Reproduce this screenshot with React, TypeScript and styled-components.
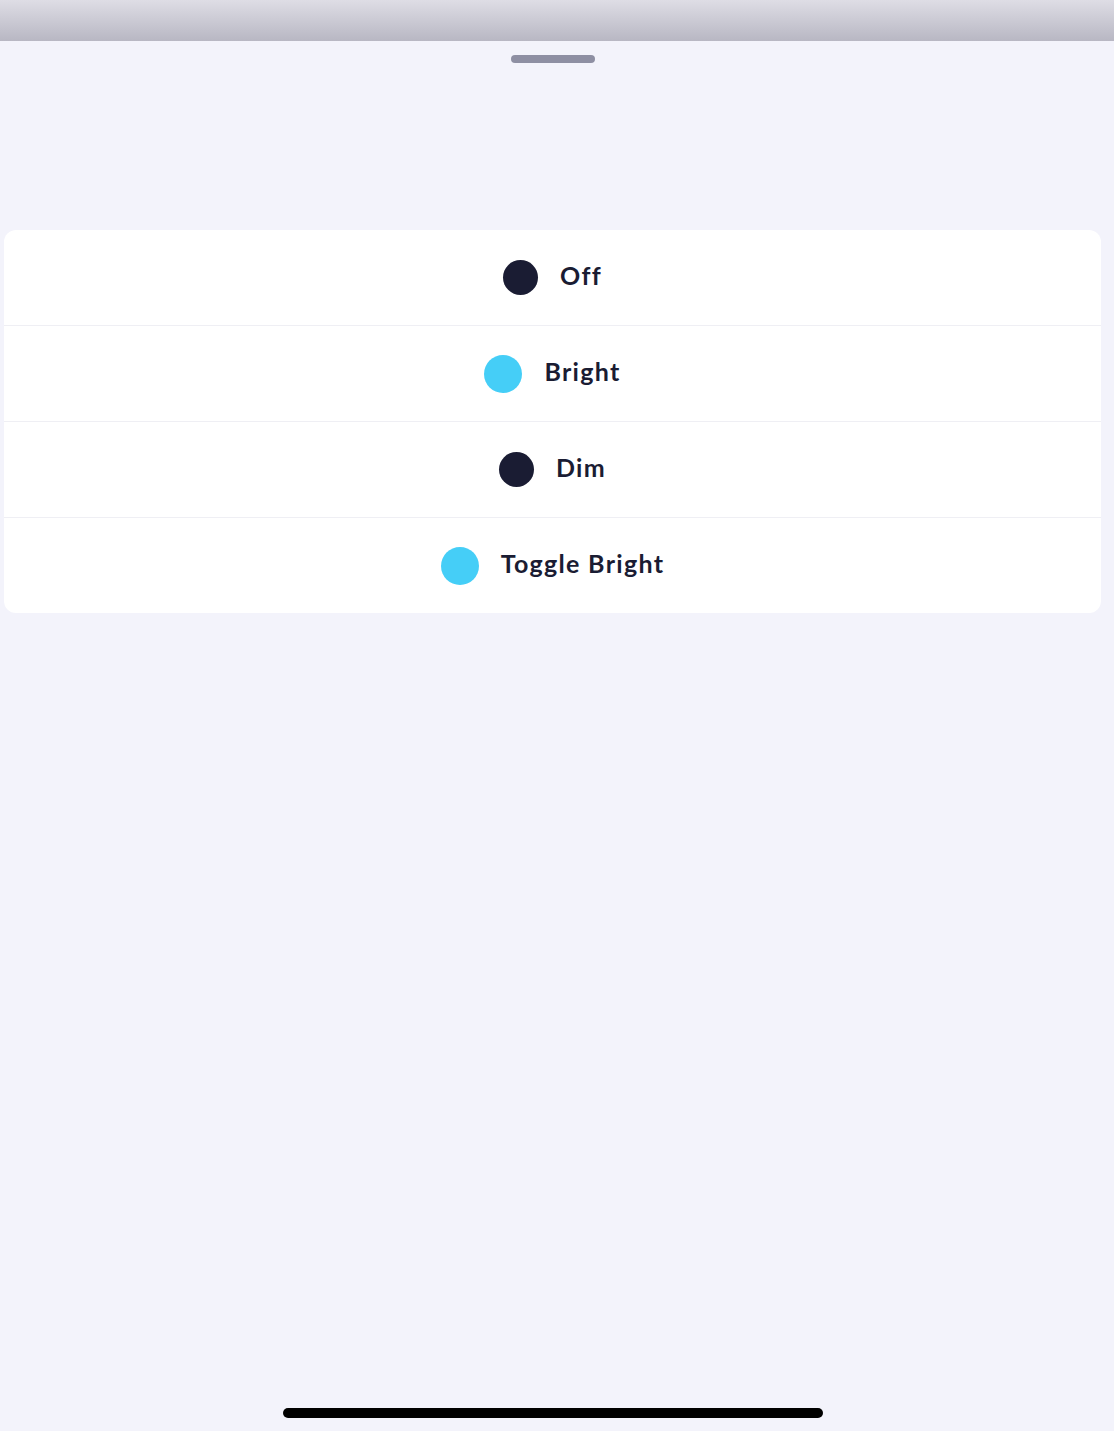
import React from "react";
import styled, { createGlobalStyle } from "styled-components";

const Global = createGlobalStyle`
  html, body { margin: 0; padding: 0; background: #f3f3fb; }
  body { font-family: "Lato", "Noto Sans", sans-serif; }
`;

const Page = styled.div`
  width: 1114px;
  height: 1431px;
  background: #f3f3fb;
  display: flex;
  flex-direction: column;
  overflow: hidden;
`;

const TopBar = styled.div`
  height: 41px;
  flex: none;
  background: linear-gradient(#dedde5, #b8b7c3);
`;

const HandleWrap = styled.div`
  display: flex;
  justify-content: center;
  padding-top: 14px;
  padding-right: 8px;
`;

const Handle = styled.div`
  width: 84px;
  height: 8px;
  border-radius: 4px;
  background: #8e8fa3;
`;

const Card = styled.div`
  margin: 167px 13px 0 4px;
  background: #ffffff;
  border-radius: 12px;
  display: flex;
  flex-direction: column;
  overflow: hidden;
`;

const Row = styled.div<{ $last?: boolean }>`
  height: 95px;
  display: flex;
  align-items: center;
  justify-content: center;
  gap: 22px;
  border-bottom: ${(p) => (p.$last ? "none" : "1px solid #efeff4")};
`;

const Dot = styled.span<{ $color: string; $size: number }>`
  width: ${(p) => p.$size}px;
  height: ${(p) => p.$size}px;
  border-radius: 50%;
  background: ${(p) => p.$color};
  flex: none;
`;

const Label = styled.span`
  font-family: "Lato", sans-serif;
  font-weight: 700;
  font-size: 25px;
  line-height: 30px;
  padding-bottom: 5px;
  letter-spacing: 1.3px;
  color: #1a1c33;
`;

const Spacer = styled.div`
  flex: 1;
`;

const HomeWrap = styled.div`
  display: flex;
  justify-content: center;
  padding-bottom: 13px;
  padding-right: 8px;
`;

const HomeIndicator = styled.div`
  width: 540px;
  height: 10px;
  border-radius: 5px;
  background: #000;
`;

const items = [
  { label: "Off", color: "#1a1c33", size: 35 },
  { label: "Bright", color: "#45cef7", size: 38 },
  { label: "Dim", color: "#1a1c33", size: 35 },
  { label: "Toggle Bright", color: "#45cef7", size: 38 },
];

export default function App() {
  return (
    <Page>
      <Global />
      <TopBar />
      <HandleWrap>
        <Handle />
      </HandleWrap>
      <Card>
        {items.map((it, i) => (
          <Row key={it.label} $last={i === items.length - 1}>
            <Dot $color={it.color} $size={it.size} />
            <Label>{it.label}</Label>
          </Row>
        ))}
      </Card>
      <Spacer />
      <HomeWrap>
        <HomeIndicator />
      </HomeWrap>
    </Page>
  );
}
